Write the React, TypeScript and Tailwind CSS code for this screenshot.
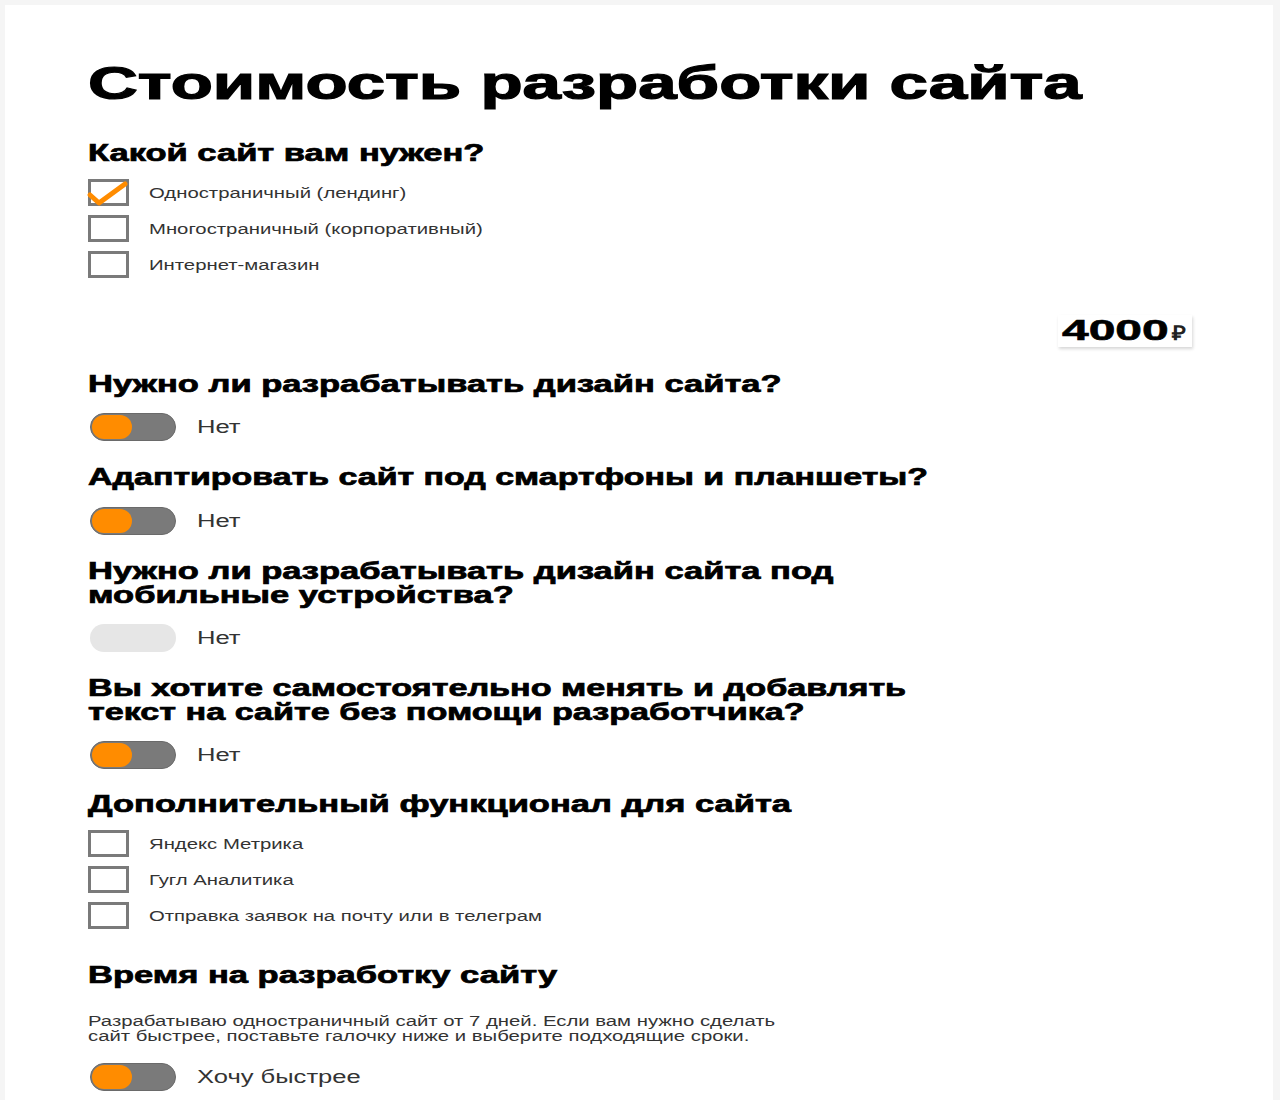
import type { ReactNode } from "react";

function Heading({ children, className = "scale-x-[1.5]" }: { children: ReactNode; className?: string }) {
  return (
    <h2
      className={`w-fit origin-left whitespace-nowrap text-[23px] leading-[24px] font-bold text-black [-webkit-text-stroke:0.7px_#000] ${className}`}
    >
      {children}
    </h2>
  );
}

function CheckRow({ label, checked = false }: { label: string; checked?: boolean }) {
  return (
    <div className="flex h-[27px] items-center">
      <span className="relative h-[27px] w-[41px] shrink-0 border-[3px] border-[#7a7a7a] bg-white">
        {checked ? (
          <svg className="absolute -left-[3px] -top-[3px] overflow-visible" width="41" height="27" viewBox="0 0 41 27">
            <path d="M2 16 L11 24 L37 5" fill="none" stroke="#ff8c00" strokeWidth="5" strokeLinecap="round" strokeLinejoin="round" />
          </svg>
        ) : null}
      </span>
      <span className="ml-[20px] inline-block origin-left scale-x-[1.45] whitespace-nowrap text-[14px] leading-none text-[#333]">{label}</span>
    </div>
  );
}

function Toggle({ label, disabled = false, className = "" }: { label: string; disabled?: boolean; className?: string }) {
  return (
    <div className={`ml-[2px] flex h-[28px] items-center ${className}`}>
      {disabled ? (
        <span className="h-[28px] w-[86px] shrink-0 rounded-full bg-[#e6e6e6]" />
      ) : (
        <span className="flex h-[28px] w-[86px] shrink-0 items-center rounded-full border border-[#6a6a6a] bg-[#7a7a7a] pl-[1px]">
          <span className="h-[24px] w-[40px] rounded-full bg-[#ff8c00]" />
        </span>
      )}
      <span className="ml-[21px] inline-block origin-left scale-x-[1.42] whitespace-nowrap text-[18px] leading-none text-[#333]">{label}</span>
    </div>
  );
}

export default function App() {
  return (
    <div className="min-h-[1100px] bg-[#f5f5f5] pl-[5px] pr-[7px] pt-[5px] font-['Liberation_Sans',Arial,sans-serif]">
      <div className="min-h-[1095px] bg-white pl-[83px] pt-[55px]">
        <h1 className="w-fit origin-left scale-x-[1.5] whitespace-nowrap text-[46px] leading-[46px] font-bold text-black [-webkit-text-stroke:1.2px_#000]">
          Стоимость разработки сайта
        </h1>

        <Heading className="mt-[35px] scale-x-[1.5]">Какой сайт вам нужен?</Heading>
        <div className="mt-[14px] flex flex-col gap-[9px]">
          <CheckRow label="Одностраничный (лендинг)" checked />
          <CheckRow label="Многостраничный (корпоративный)" />
          <CheckRow label="Интернет-магазин" />
        </div>

        <div className="mt-[36.5px] flex justify-end pr-[81px]">
          <div className="flex w-[134px] items-baseline justify-end pb-[2px] pr-[6px] shadow-[1px_2px_3px_rgba(0,0,0,0.16)]">
            <span className="inline-block origin-right scale-x-[1.6] text-[30px] leading-[30px] font-bold text-black [-webkit-text-stroke:0.6px_#000]">4000</span>
            <span className="ml-[5px] inline-block origin-right scale-x-[1.2] text-[20px] leading-none font-bold text-[#222]">₽</span>
          </div>
        </div>

        <Heading className="mt-[25px] scale-x-[1.5]">Нужно ли разрабатывать дизайн сайта?</Heading>
        <Toggle label="Нет" className="mt-[17.5px]" />

        <Heading className="mt-[24px] scale-x-[1.475]">Адаптировать сайт под смартфоны и планшеты?</Heading>
        <Toggle label="Нет" className="mt-[17.5px]" />

        <Heading className="mt-[24px] scale-x-[1.5]">
          Нужно ли разрабатывать дизайн сайта под
          <br />
          мобильные устройства?
        </Heading>
        <Toggle label="Нет" disabled className="mt-[17px]" />

        <Heading className="mt-[24px] scale-x-[1.485]">
          Вы хотите самостоятельно менять и добавлять
          <br />
          текст на сайте без помощи разработчика?
        </Heading>
        <Toggle label="Нет" className="mt-[17px]" />

        <Heading className="mt-[23.5px] scale-x-[1.5]">Дополнительный функционал для сайта</Heading>
        <div className="mt-[14px] flex flex-col gap-[9px]">
          <CheckRow label="Яндекс Метрика" />
          <CheckRow label="Гугл Аналитика" />
          <CheckRow label="Отправка заявок на почту или в телеграм" />
        </div>

        <Heading className="mt-[34px] scale-x-[1.5]">Время на разработку сайту</Heading>
        <p className="mt-[27px] w-fit origin-left scale-x-[1.45] whitespace-nowrap text-[14px] leading-[15px] text-[#333]">
          Разрабатываю одностраничный сайт от 7 дней. Если вам нужно сделать
          <br />
          сайт быстрее, поставьте галочку ниже и выберите подходящие сроки.
        </p>
        <Toggle label="Хочу быстрее" className="mt-[19px]" />
      </div>
    </div>
  );
}
